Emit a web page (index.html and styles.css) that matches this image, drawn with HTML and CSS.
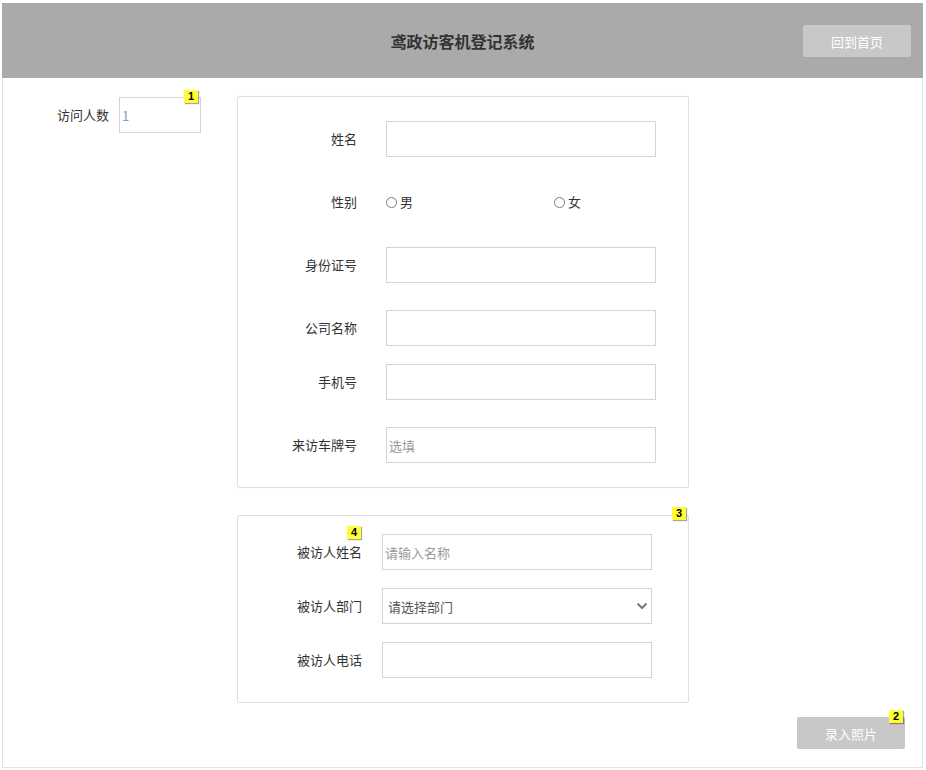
FILE: index.html
```html
<!DOCTYPE html>
<html lang="zh-CN">
<head>
<meta charset="utf-8">
<title>鸢政访客机登记系统</title>
<link rel="stylesheet" href="styles.css">
</head>
<body>
<div class="page">
  <header class="topbar">
    <h1 class="title">鸢政访客机登记系统</h1>
    <button class="btn btn-home" type="button">回到首页</button>
  </header>
  <main class="main">
    <div class="content">
      <div class="visitors">
        <label class="lbl-count">访问人数</label>
        <span class="count-wrap">
          <input class="field field-count" type="text" value="1">
          <span class="badge badge-1">1</span>
        </span>
      </div>
      <div class="cards">
        <section class="card card-visitor">
          <div class="row">
            <label class="lbl">姓名</label>
            <input class="field" type="text">
          </div>
          <div class="row">
            <label class="lbl">性别</label>
            <div class="radios">
              <label class="radio radio-first"><input type="radio" name="sex"><span>男</span></label>
              <label class="radio"><input type="radio" name="sex"><span>女</span></label>
            </div>
          </div>
          <div class="row">
            <label class="lbl">身份证号</label>
            <input class="field" type="text">
          </div>
          <div class="row row-tight">
            <label class="lbl">公司名称</label>
            <input class="field" type="text">
          </div>
          <div class="row">
            <label class="lbl">手机号</label>
            <input class="field" type="text">
          </div>
          <div class="row row-last">
            <label class="lbl">来访车牌号</label>
            <input class="field" type="text" placeholder="选填">
          </div>
        </section>
        <section class="card card-host">
          <span class="badge badge-3">3</span>
          <div class="row2">
            <label class="lbl2">被访人姓名<span class="badge badge-4">4</span></label>
            <input class="field" type="text" placeholder="请输入名称">
          </div>
          <div class="row2">
            <label class="lbl2">被访人部门</label>
            <span class="select-wrap">
              <select class="field select">
                <option>请选择部门</option>
              </select>
              <svg class="chev" width="12" height="8" viewBox="0 0 12 8"><path d="M1.5 1.5 L6 6 L10.5 1.5" fill="none" stroke="#777" stroke-width="2"/></svg>
            </span>
          </div>
          <div class="row2 row-last">
            <label class="lbl2">被访人电话</label>
            <input class="field" type="text">
          </div>
        </section>
      </div>
    </div>
    <div class="footer">
      <span class="photo-wrap">
        <button class="btn btn-photo" type="button">录入照片</button>
        <span class="badge badge-2">2</span>
      </span>
    </div>
  </main>
</div>
</body>
</html>
```
FILE: styles.css
```css
* { box-sizing: border-box; }
html, body { margin: 0; padding: 0; background: #fff; }
body {
  font-family: "Microsoft YaHei", "Noto Sans CJK SC", "Liberation Sans", sans-serif;
  font-size: 13px;
  color: #333;
}
.page {
  width: 921px;
  margin: 3px 0 0 2px;
}
.topbar {
  height: 75px;
  background: #aaaaaa;
  display: flex;
  align-items: center;
  justify-content: center;
  position: relative;
}
.title {
  margin: 0;
  font-size: 16px;
  font-weight: bold;
  color: #333;
  line-height: 20px;
}
.btn {
  font-family: inherit;
  font-size: 13px;
  color: #fff;
  background: #c8c8c8;
  border: none;
  border-radius: 2px;
  width: 108px;
  height: 32px;
  padding: 0;
  cursor: pointer;
}
.btn-home {
  position: absolute;
  right: 12px;
  top: 22px;
}
.main {
  height: 690px;
  border: 1px solid #e2e2e2;
  border-top: none;
  padding-top: 18px;
}
.content {
  display: flex;
  align-items: flex-start;
}
.visitors {
  display: flex;
  align-items: center;
  margin-left: 54px;
  margin-top: 1px;
}
.lbl-count {
  width: 62px;
  line-height: 16px;
}
.count-wrap { position: relative; display: inline-block; }
.field {
  display: block;
  width: 270px;
  height: 36px;
  border: 1px solid #d4d4d4;
  border-radius: 0;
  padding: 0 2px;
  font-family: inherit;
  font-size: 13px;
  color: #333;
  background: #fff;
  outline: none;
}
.field::placeholder { color: #9a9a9a; }
.field-count {
  width: 82px;
  color: #7e9cb8;
}
.cards {
  margin-left: 36px;
  display: flex;
  flex-direction: column;
  gap: 27px;
}
.card {
  width: 452px;
  border: 1px solid #e0e0e0;
  border-radius: 2px;
  box-shadow: 0 0 1px rgba(0,0,0,0.06);
  position: relative;
}
.card-visitor { padding: 24px 0 24px; }
.card-host { padding: 18px 0 24px; }
.row {
  display: flex;
  align-items: center;
  height: 36px;
  margin-bottom: 27px;
}
.row.row-tight { margin-bottom: 18px; }
.row2 {
  display: flex;
  align-items: center;
  height: 36px;
  margin-bottom: 18px;
}
.row.row-last,
.row2.row-last { margin-bottom: 0; }
.lbl {
  width: 119px;
  text-align: right;
  margin-right: 29px;
  line-height: 16px;
  padding-bottom: 1px;
}
.radios { display: flex; align-items: center; }
.radio {
  display: flex;
  align-items: center;
  line-height: 16px;
}
.radio-first { width: 168px; }
.radio input {
  -webkit-appearance: none;
  appearance: none;
  width: 11px;
  height: 11px;
  border: 1px solid #7a7a7a;
  border-radius: 50%;
  margin: 1px 3px 0 0;
  background: #fff;
}
.lbl2 {
  width: 124px;
  text-align: right;
  margin-right: 20px;
  line-height: 16px;
  padding-bottom: 1px;
  position: relative;
}
.select-wrap { position: relative; display: block; }
.select {
  -webkit-appearance: none;
  appearance: none;
  padding-left: 5px;
  color: #555;
}
.chev {
  position: absolute;
  right: 4px;
  top: 14px;
}
.footer {
  display: flex;
  justify-content: flex-end;
  padding-right: 17px;
  margin-top: 14px;
}
.photo-wrap { position: relative; display: inline-block; }
.btn-photo { height: 32px; }
.badge {
  position: absolute;
  width: 14px;
  height: 13px;
  background: #ffff33;
  color: #000;
  font-family: "Liberation Sans", Arial, sans-serif;
  font-size: 11px;
  font-weight: bold;
  line-height: 13px;
  text-align: center;
  box-shadow: 1px 1px 1px rgba(0,0,0,0.35);
}
.badge-1 { right: 3px; top: -7px; }
.badge-2 { right: 2px; top: -7px; }
.badge-3 { right: 2px; top: -9px; }
.badge-4 { right: 1px; top: -18px; }
```
